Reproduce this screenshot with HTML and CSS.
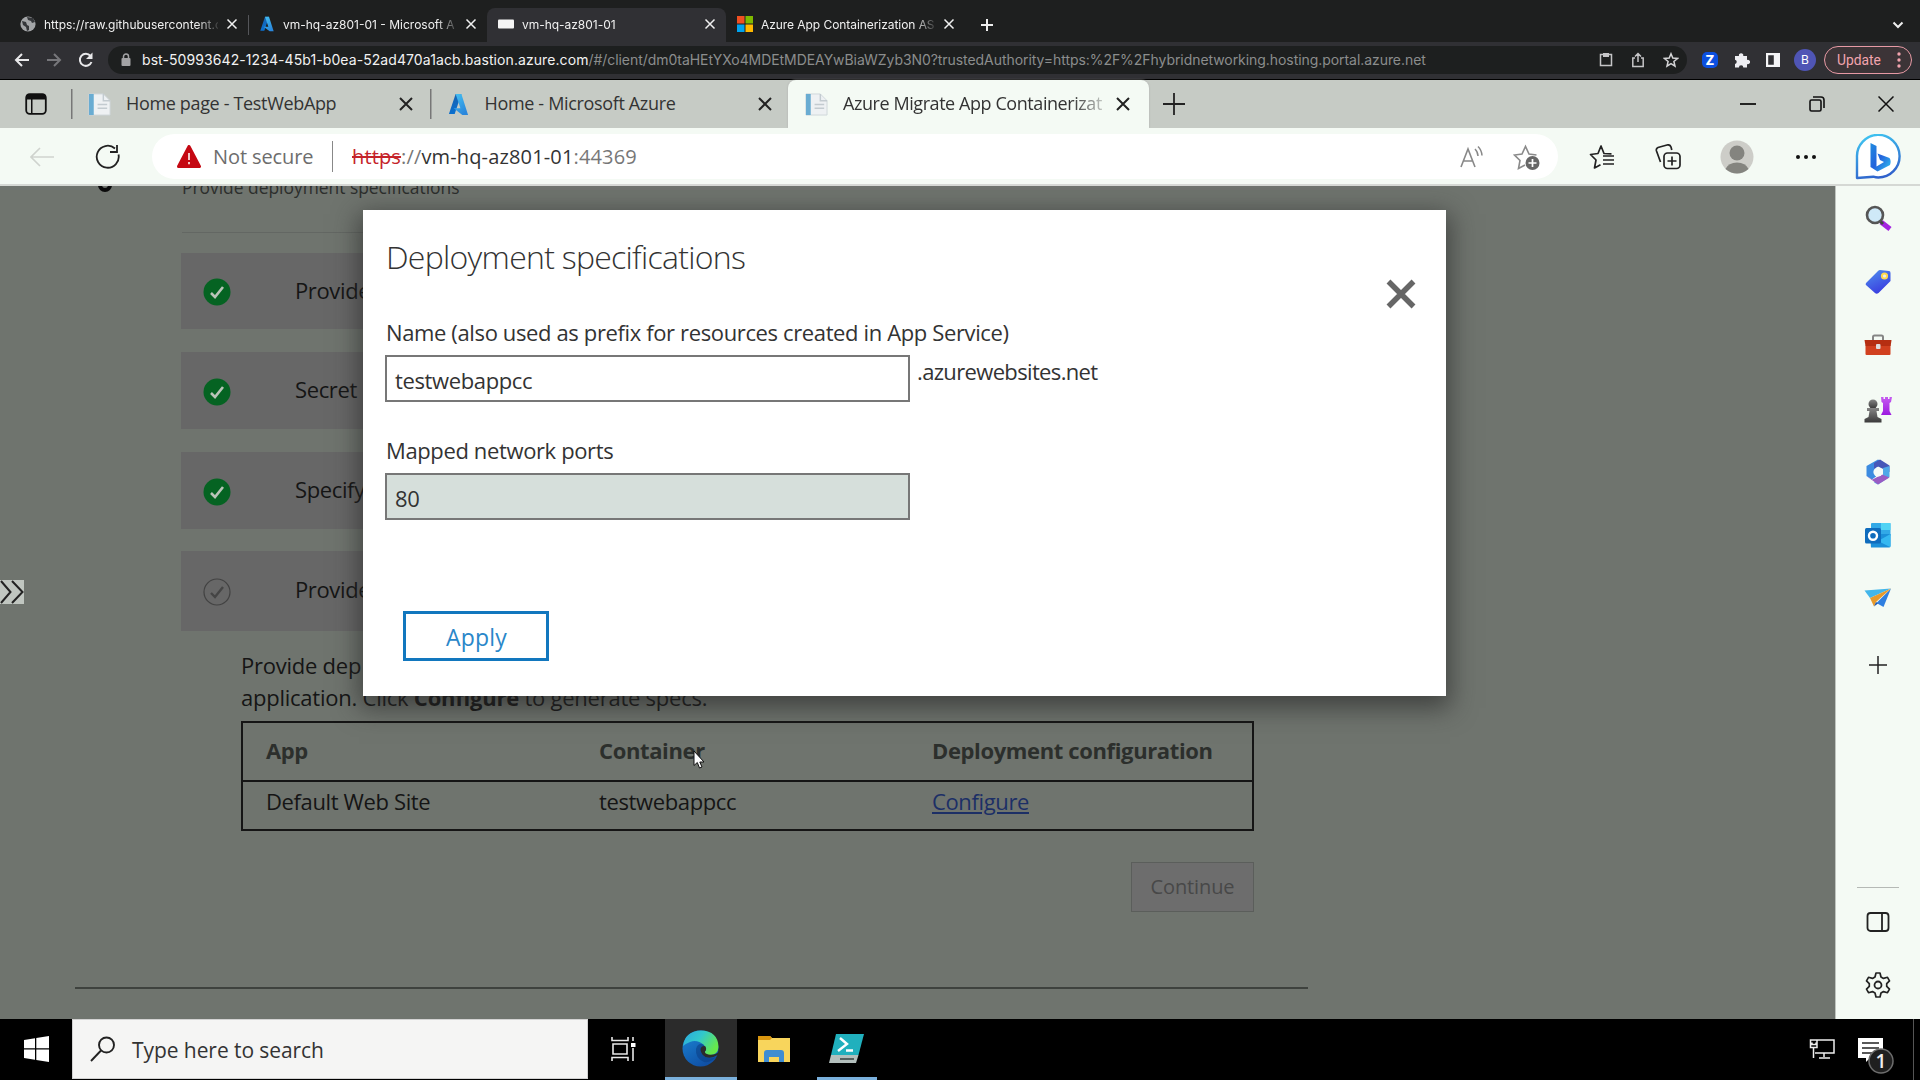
FILE: index.html
```html
<!DOCTYPE html>
<html lang="en">
<head>
<meta charset="utf-8">
<title>vm-hq-az801-01</title>
<link rel="stylesheet" href="styles.css">
</head>
<body>
<svg class="defs" width="0" height="0" aria-hidden="true">
  <defs>
    <linearGradient id="az1" x1="0" y1="0" x2="0.3" y2="1"><stop offset="0" stop-color="#1a5fa8"/><stop offset="1" stop-color="#0a70d0"/></linearGradient>
    <linearGradient id="az2" x1="0" y1="0" x2="0.6" y2="1"><stop offset="0" stop-color="#46c3f2"/><stop offset="1" stop-color="#2a87dc"/></linearGradient>
    <linearGradient id="bingRing" x1="0.3" y1="0" x2="0.6" y2="1"><stop offset="0" stop-color="#3fc3f0"/><stop offset="1" stop-color="#2f5fcb"/></linearGradient>
    <linearGradient id="bingB" x1="0" y1="0" x2="1" y2="1"><stop offset="0" stop-color="#1f8be0"/><stop offset="0.5" stop-color="#2463dc"/><stop offset="1" stop-color="#33c4f0"/></linearGradient>
    <linearGradient id="tagFill" x1="0" y1="0" x2="0.5" y2="1"><stop offset="0" stop-color="#4f92ee"/><stop offset="1" stop-color="#3a3ee0"/></linearGradient>
    <linearGradient id="pawnFill" x1="0" y1="0" x2="0" y2="1"><stop offset="0" stop-color="#858585"/><stop offset="1" stop-color="#3a3a3a"/></linearGradient>
    <linearGradient id="rookFill" x1="0" y1="0" x2="0" y2="1"><stop offset="0" stop-color="#c65cf0"/><stop offset="1" stop-color="#9c1ae0"/></linearGradient>
    <linearGradient id="edgeTop" x1="0" y1="0" x2="1" y2="0.5"><stop offset="0" stop-color="#2aa6e0"/><stop offset="0.5" stop-color="#32c8cc"/><stop offset="1" stop-color="#66e84c"/></linearGradient>
    <linearGradient id="edgeBase" x1="0" y1="0" x2="0.6" y2="1"><stop offset="0" stop-color="#1c86d6"/><stop offset="1" stop-color="#0f4fa4"/></linearGradient>
    <symbol id="azure" viewBox="0 0 22 24"><path d="M8 1h6L7 22H1z" fill="url(#az1)"/><path d="M8 1h6l7 22h-6L6 16h7z" fill="url(#az2)"/></symbol>
    <symbol id="close" viewBox="0 0 16 16"><path d="M2 2l12 12M14 2L2 14" fill="none" stroke="currentColor" stroke-width="2"/></symbol>
    <symbol id="page" viewBox="0 0 24 24"><path d="M1 1h15l7 7v15H1z" fill="#eef1f3" stroke="#cfd6da"/><path d="M1 1h5v22H1z" fill="#69acd2"/><path d="M16 1v7h7M10 12h10M10 16h10" fill="none" stroke="#c3cbd0" stroke-width="1.5"/></symbol>
    <symbol id="done" viewBox="0 0 28 28"><circle cx="14" cy="14" r="13.5" fill="#056322"/><path d="M8 15l4 4 8-10" fill="none" stroke="#b9c4b8" stroke-width="2.6"/></symbol>
  </defs>
</svg>

<div class="screen">
  <header class="chrome-tabs">
    <div class="ctab">
      <svg class="fav" viewBox="0 0 16 16"><circle cx="8" cy="8" r="7.6" fill="#a3a5a7"/><path d="M2 5l4 1 1 3 2 1v4l-2 1-1-4-3-2zM7 1l1 3 3 1 1 2 3-1-2-4z" fill="#35373a"/></svg>
      <span class="ctitle">https://raw.githubusercontent.c</span><svg class="cx"><use href="#close"/></svg>
    </div>
    <div class="ctab ruled">
      <svg class="fav"><use href="#azure"/></svg>
      <span class="ctitle">vm-hq-az801-01 - Microsoft A</span><svg class="cx"><use href="#close"/></svg>
    </div>
    <div class="ctab current">
      <svg class="fav" viewBox="0 0 16 16"><rect y="3.500" width="16" height="9" rx="1" fill="#f4f4f4"/></svg>
      <span class="ctitle">vm-hq-az801-01</span><svg class="cx"><use href="#close"/></svg>
    </div>
    <div class="ctab">
      <svg class="fav" viewBox="0 0 16 16"><path d="M0 0h7.500v7.500H0z" fill="#f05022"/><path d="M8.500 0H16v7.500H8.500z" fill="#7fba00"/><path d="M0 8.500h7.500V16H0z" fill="#00a4ef"/><path d="M8.500 8.500H16V16H8.500z" fill="#ffb900"/></svg>
      <span class="ctitle tight">Azure App Containerization AS</span><svg class="cx"><use href="#close"/></svg>
    </div>
    <svg class="cplus" viewBox="0 0 14 14"><path d="M7 1v12M1 7h12" stroke="#eee" stroke-width="2"/></svg>
    <svg class="cmenu" viewBox="0 0 12 8"><path d="M1.500 1.500L6 6l4.500-4.500" fill="none" stroke="#eee" stroke-width="2"/></svg>
  </header>

  <div class="chrome-bar">
    <nav class="cnav">
      <svg width="16" height="16" viewBox="0 0 16 16"><path d="M15 8H2M8 2L2 8l6 6" fill="none" stroke="#e8e8ea" stroke-width="2"/></svg>
      <svg width="16" height="16" viewBox="0 0 16 16"><path d="M1 8h13M8 2l6 6-6 6" fill="none" stroke="#77777b" stroke-width="2"/></svg>
      <svg width="16" height="16" viewBox="0 0 16 16"><path d="M13.500 10A6 6 0 1 1 12.500 4" fill="none" stroke="#e8e8ea" stroke-width="2"/><path d="M14.500 .5v6.500H8z" fill="#e8e8ea"/></svg>
    </nav>
    <div class="curl">
      <svg class="lock" viewBox="0 0 10 14"><rect x="0.500" y="5" width="9" height="8" rx="1" fill="#a3a3a5"/><path d="M2.500 5V3.500a2.500 2.500 0 0 1 5 0V5" fill="none" stroke="#a3a3a5" stroke-width="1.500"/></svg>
      <span class="chost">bst-50993642-1234-45b1-b0ea-52ad470a1acb.bastion.azure.com</span><span class="cpath">/#/client/dm0taHEtYXo4MDEtMDEAYwBiaWZyb3N0?trustedAuthority=https:%2F%2Fhybridnetworking.hosting.portal.azure.net</span>
      <div class="cactions">
        <svg width="14" height="15" viewBox="0 0 14 15"><path d="M1.500 2.500h11v11h-11z" fill="none" stroke="#c5c5c7" stroke-width="1.500"/><path d="M4 1h6v4H4z" fill="#c5c5c7"/></svg>
        <svg width="14" height="16" viewBox="0 0 14 16"><path d="M4 6H1.800v8.500h10.400V6H10M7 10V2M4 4.500L7 1.500l3 3" fill="none" stroke="#c5c5c7" stroke-width="1.500"/></svg>
        <svg width="16" height="16" viewBox="0 0 16 16"><path d="M8 1.800l1.800 4.300 4.700.4-3.600 3 1.100 4.600L8 11.700 4 14.100l1.100-4.600-3.600-3 4.700-.4z" fill="none" stroke="#d5d5d7" stroke-width="1.500"/></svg>
      </div>
    </div>
    <div class="cext">
      <span class="zoomext">Z</span>
      <svg width="16" height="16" viewBox="0 0 16 16"><path d="M1 4h4a2.200 2.200 0 1 1 4.200 0H13v4a2.200 2.200 0 1 1 0 4v3.500H9.300a2.200 2.200 0 0 0-4.400 0H1V12a2.200 2.200 0 0 0 0-4.300z" fill="#eeeef2"/></svg>
      <svg width="14" height="14" viewBox="0 0 14 14"><path d="M0 0h14v14H0zM2.200 2.200v9.600h5.600V2.200z" fill="#f4f4f6" fill-rule="evenodd"/></svg>
      <span class="cavatar">B</span>
    </div>
    <div class="update">Update<svg width="4" height="16" viewBox="0 0 4 16"><circle cx="2" cy="2" r="1.700" fill="#f2a4ae"/><circle cx="2" cy="8" r="1.700" fill="#f2a4ae"/><circle cx="2" cy="14" r="1.700" fill="#f2a4ae"/></svg></div>
  </div>

  <div class="edge-tabs">
    <svg class="workspace" viewBox="0 0 22 22"><rect x="1.200" y="1.200" width="19.600" height="19.600" rx="3.500" fill="none" stroke="#111" stroke-width="1.800"/><path d="M1 6.500V4q0-3 3-3h14q3 0 3 3v2.500zM6 6h1.500v15H6z" fill="#111"/></svg>
    <div class="etab"><svg class="efav"><use href="#page"/></svg><span class="etitle">Home page - TestWebApp</span><svg class="ex"><use href="#close"/></svg></div>
    <div class="etab"><svg class="efav"><use href="#azure"/></svg><span class="etitle">Home - Microsoft Azure</span><svg class="ex"><use href="#close"/></svg></div>
    <div class="etab live"><svg class="efav"><use href="#page"/></svg><span class="etitle faded">Azure Migrate App Containerizat</span><svg class="ex"><use href="#close"/></svg></div>
    <svg class="eplus" viewBox="0 0 22 22"><path d="M11 0v22M0 11h22" stroke="#222" stroke-width="1.800"/></svg>
    <div class="wincontrols">
      <svg width="16" height="16" viewBox="0 0 16 16"><path d="M0 8h16" stroke="#111" stroke-width="1.800"/></svg>
      <svg width="16" height="16" viewBox="0 0 16 16"><rect x="1" y="4" width="11" height="11" rx="1.500" fill="none" stroke="#111" stroke-width="1.600"/><path d="M4 1h8q3 0 3 3v8" fill="none" stroke="#111" stroke-width="1.600"/></svg>
      <svg width="16" height="16" viewBox="0 0 16 16"><path d="M.5.500l15 15M15.500.500l-15 15" stroke="#111" stroke-width="1.500"/></svg>
    </div>
  </div>

  <div class="edge-bar">
    <svg class="eback" viewBox="0 0 24 20"><path d="M24 10H1M10 1L1 10l9 9" fill="none" stroke="#cfd3ce" stroke-width="1.600"/></svg>
    <svg class="ereload" viewBox="0 0 26 26"><path d="M23.500 10.500a11 11 0 1 1-3.500-6" fill="none" stroke="#222" stroke-width="1.800"/><path d="M22 1v7h-7" fill="none" stroke="#222" stroke-width="1.800"/></svg>
    <div class="eurl">
      <svg class="warn" viewBox="0 0 24 23"><path d="M12 1.500L22.500 21.500h-21z" fill="#c50812" stroke="#c50812" stroke-width="3" stroke-linejoin="round"/><path d="M12 8v7M12 17v2.200" stroke="#f3c8c8" stroke-width="2"/></svg>
      <span class="insecure">Not secure</span>
      <span class="eaddr"><s>https</s><i>://</i>vm-hq-az801-01<i>:44369</i></span>
      <svg class="aloud" viewBox="0 0 24 24"><path d="M1 22L8 4l7 18M3.500 16h9" fill="none" stroke="#888" stroke-width="1.600"/><path d="M15 4a10 10 0 0 1 3 7M18 1.500a14 14 0 0 1 4 9" fill="none" stroke="#888" stroke-width="1.500"/></svg>
      <svg class="addfav" viewBox="0 0 27 26"><path d="M12 21l-6.500 3.500L7 16.500 1.500 11l7.500-1L12.500 2.500 16 10l7.500 1" fill="none" stroke="#8a8a8a" stroke-width="1.600"/><circle cx="19.500" cy="19" r="7" fill="#666"/><path d="M19.500 15v8M15.500 19h8" stroke="#fff" stroke-width="1.700"/></svg>
    </div>
    <div class="etools">
      <svg width="26" height="26" viewBox="0 0 26 26"><path d="M22.500 9.800L15 9.500 12 2 9 9.500l-7.500 1L7 16l-1.500 8 6-3.200M14 12h11M14 16h11M14 20h11" fill="none" stroke="#222" stroke-width="1.700" stroke-linejoin="round"/></svg>
      <svg width="26" height="26" viewBox="0 0 26 26"><rect x="9" y="9" width="16" height="15.500" rx="3.500" fill="none" stroke="#222" stroke-width="1.700"/><path d="M17 12.500v9M12.500 17h9M5.500 18L1.500 7q-.8-2.500 1.500-3.500L12 1q3-.8 4 2l.8 3" fill="none" stroke="#222" stroke-width="1.700"/></svg>
      <svg width="34" height="34" viewBox="0 0 34 34"><circle cx="17" cy="17" r="16.500" fill="#cdcdc8"/><circle cx="17" cy="13" r="7.500" fill="#84847f"/><path d="M5.500 29q3-6.500 11.500-6.500T28.500 29Q23 33.500 17 33.500T5.500 29z" fill="#84847f"/></svg>
      <svg width="22" height="6" viewBox="0 0 22 6"><circle cx="3" cy="3" r="2" fill="#111"/><circle cx="11" cy="3" r="2" fill="#111"/><circle cx="19" cy="3" r="2" fill="#111"/></svg>
      <svg width="46" height="46" viewBox="0 0 46 46"><path d="M2 44V23a21.300 21.300 0 1 1 21.300 20.500q-2.500 0-5-.8z" fill="#fff" stroke="url(#bingRing)" stroke-width="2.400" stroke-linejoin="round"/><path d="M15.500 9l6 3v20.500l7.500-4.500-4-2-2.500-6.500 12 4.500q2 3 .5 7L22.500 37.500l-7-4.500z" fill="url(#bingB)"/></svg>
    </div>
  </div>

  <div class="workarea">
    <main class="page">
      <div class="progress"><span class="dot"></span><span class="phase">Provide deployment specifications</span></div>
      <hr class="thin">
      <section class="steps">
        <div class="step"><svg><use href="#done"/></svg><span>Provide</span></div>
        <div class="step"><svg><use href="#done"/></svg><span>Secret</span></div>
        <div class="step"><svg><use href="#done"/></svg><span>Specify</span></div>
        <div class="step"><svg viewBox="0 0 28 28"><circle cx="14" cy="14" r="13" fill="none" stroke="#424242" stroke-width="1.200"/><path d="M8 15l4 4 8-10" fill="none" stroke="#454545" stroke-width="2.400"/></svg><span>Provide</span></div>
      </section>
      <p class="intro">Provide dep<br>application. Click <b>Configure</b> to generate specs.</p>
      <table class="apps">
        <colgroup><col class="c1"><col class="c2"><col></colgroup>
        <tr><th>App</th><th>Container</th><th>Deployment configuration</th></tr>
        <tr><td>Default Web Site</td><td>testwebappcc</td><td><a>Configure</a></td></tr>
      </table>
      <div class="continue">Continue</div>
      <hr class="end">

      <div class="expander"><svg width="24" height="24" viewBox="0 0 24 24"><path d="M1 1l9.500 11L1 23M12 1l10.500 11L12 23" fill="none" stroke="#222" stroke-width="2"/></svg></div>

      <div class="modal">
        <div class="modal-head"><h1>Deployment specifications</h1><svg viewBox="0 0 30 30"><path d="M2.500 2.500l25 25M27.500 2.500l-25 25" stroke="#666" stroke-width="5.500"/></svg></div>
        <label>Name (also used as prefix for resources created in App Service)</label>
        <div class="field"><div class="box">testwebappcc</div><span class="suffix">.azurewebsites.net</span></div>
        <label class="second">Mapped network ports</label>
        <div class="field"><div class="box locked">80</div></div>
        <div class="apply">Apply</div>
      </div>

      <svg class="cursor" viewBox="0 0 12 19"><path d="M1 1v14.500l3.300-3L6.500 18l2.500-1-2.200-5H11z" fill="#fff" stroke="#111"/></svg>
    </main>

    <aside class="rail">
      <svg viewBox="0 0 28 28"><path d="M17 17l9 7" stroke="#a423e0" stroke-width="5"/><path d="M15 15l4 4" stroke="#444" stroke-width="3"/><circle cx="11" cy="10" r="8" fill="#cfe9f8" stroke="#555" stroke-width="2.600"/></svg>
      <svg viewBox="0 0 28 28"><path d="M2 15L14 3q1-1 2-1l9 1q1.500 0 1.500 2v8L14.500 25q-2 1.500-3.500 0l-8.500-7.500q-1.500-1-.5-2.500z" fill="url(#tagFill)"/><circle cx="20.500" cy="8" r="3.600" fill="#ffd84d"/><circle cx="20.500" cy="8" r="1.600" fill="#e8eef4"/></svg>
      <svg viewBox="0 0 28 28"><path d="M9 9V6q0-1.500 1.500-1.500h7Q19 4.500 19 6v3" fill="none" stroke="#858585" stroke-width="2"/><rect x="1.500" y="14" width="25" height="10" rx="1" fill="#d1401f"/><path d="M.5 9h27l-.8 6H1.500z" fill="#b52e12"/><rect x="12" y="13" width="4.500" height="5" rx="1" fill="#ddd"/></svg>
      <svg viewBox="0 0 28 28"><path d="M17 2h2.500v2H21V2h3v2h1.500V2H28l-1 5-1.500 1v8l2 4H17l2-4V8l-1.500-1z" fill="url(#rookFill)"/><circle cx="9" cy="9" r="4.500" fill="url(#pawnFill)"/><path d="M3 13h12v3h-2.500l1 6 4 2v3.500H.5V24l4-2 1-6H3z" fill="url(#pawnFill)"/></svg>
      <svg viewBox="0 0 28 28"><path d="M14 1.500l6 3-8 5v9l-4 3-5.500-3.500V8z" fill="#3c8be0"/><path d="M16 1.500l9.500 6V14L14 8.500 10 11V5z" fill="#4657b8"/><path d="M25.500 8v11L14 26.500l-4-2 9-5.500v-9z" fill="#4ea8e8"/><path d="M2.500 18l6 3.500 9.500-5 7.500 3L14 26.500z" fill="#985cc4"/><circle cx="14" cy="14" r="4.600" fill="#f5fbf6"/></svg>
      <svg viewBox="0 0 28 28"><rect x="7" y="2" width="19.500" height="13" rx="1" fill="#32a9e7"/><path d="M17 2h9.500v7H17z" fill="#50d3f4"/><path d="M6 13l20.500 0v12q0 1.500-1.500 1.500H7z" fill="#1b8fd8"/><path d="M26.500 13L14 20l12 6q.5-.5.500-1z" fill="#35b8f1"/><rect x="1" y="7" width="16" height="15.500" rx="1.500" fill="#0f6cbd"/><circle cx="9" cy="14.700" r="4" fill="none" stroke="#fff" stroke-width="2.400"/></svg>
      <svg viewBox="0 0 28 28"><path d="M.5 6.500L27 4.500 6 14z" fill="#42b6ea"/><path d="M27 4.500L19.500 23l-7-4z" fill="#2f7fe0"/><path d="M27 4.500L12 18l-2 4.500L6 14z" fill="#e79a2c"/><path d="M12 18l-2 4.500 4-3z" fill="#1b56b0"/></svg>
      <svg viewBox="0 0 28 28"><path d="M14 5v18M5 14h18" stroke="#222" stroke-width="1.500"/></svg>
      <hr>
      <svg viewBox="0 0 28 28"><rect x="3.500" y="5" width="21" height="18" rx="3" fill="none" stroke="#222" stroke-width="1.800"/><path d="M18 5v18" stroke="#222" stroke-width="1.800"/></svg>
      <svg viewBox="0 0 28 28"><path d="M12 2h4l1 4 2.500 1.400L23.500 6.300l2 3.500L22.700 12.600v2.800l2.800 2.800-2 3.500-4-1.100L17 22l-1 4h-4l-1-4-2.500-1.400-4 1.100-2-3.500 2.800-2.800v-2.800L2.500 9.800l2-3.500 4 1.100L11 6z" fill="none" stroke="#222" stroke-width="1.700" stroke-linejoin="round"/><circle cx="14" cy="14" r="3.500" fill="none" stroke="#222" stroke-width="1.800"/></svg>
    </aside>
  </div>

  <footer class="taskbar">
    <div class="start"><svg width="25" height="26" viewBox="0 0 25 26"><path d="M0 4l11-1.800V12.300H0zM12.300 2L25 0v12.300H12.300zM0 13.600h11v10.200L0 22zM12.300 13.600H25V26l-12.700-2z" fill="#fff"/></svg></div>
    <div class="search"><svg width="26" height="26" viewBox="0 0 26 26"><circle cx="16.500" cy="9" r="7.500" fill="none" stroke="#222" stroke-width="1.900"/><path d="M11 14.500L1 25" stroke="#222" stroke-width="1.900"/></svg><span>Type here to search</span></div>
    <div class="task"><svg width="26" height="24" viewBox="0 0 26 24"><path d="M2 7h14v10H2zM1 0v3.500h16V0M1 24v-3.500h16V24M22 0v4M22 11v13" fill="none" stroke="#e8e8e8" stroke-width="1.600"/><path d="M20 6h4.500v4H20z" fill="#fff"/></svg></div>
    <div class="task active"><svg width="37" height="37" viewBox="0 0 37 37"><circle cx="18.500" cy="18.500" r="18" fill="url(#edgeBase)"/><path d="M1 16Q3 1 19 .5 36 1 36.500 17 36 25 28 25q-5 0-6-2 3-4 0-8-7-6-14-3-5 2-7 4z" fill="url(#edgeTop)"/><path d="M22 15q-6-3-8 4-1 9 8 13 7 1 12-5-7 3-12-1-3-3-1-6 2-2 1-5z" fill="#0b3f86" opacity=".6"/><path d="M22.500 16q-4 0-4 4 1 5 5 7 6 2 12-2l1.500 1q1-2 .5-5-4 5-11 3.500-4-1-3.500-3 2-2 .5-5z" fill="#2b2b2b"/></svg></div>
    <div class="task"><svg width="34" height="28" viewBox="0 0 34 28"><path d="M1 1h12l2 2h18v24H1z" fill="#f8d55c"/><path d="M1 1h12l2 2-2 2H1z" fill="#d9960f"/><path d="M7 27V18q0-3 3-3h14q3 0 3 3v9h-5v-5h-10v5z" fill="#3f8dd2"/></svg></div>
    <div class="task running"><svg width="37" height="31" viewBox="0 0 37 31"><path d="M8 1h28l-5.500 21H3z" fill="#20b0bd"/><path d="M3 22h27.500L28 30H1z" fill="#b3bfbc"/><path d="M12 5l7 6-9 7M18 17.500h7" fill="none" stroke="#fff" stroke-width="2.400"/><path d="M12 26h14" stroke="#54605e" stroke-width="2"/></svg></div>
    <div class="tray">
      <svg width="26" height="22" viewBox="0 0 26 22"><path d="M8 2h17v13H6M15 15v4M10 20h11M1.500 2H8v7.500H1.500zM4.500 9.500V20M3 4.500v2h4v-2" fill="none" stroke="#eee" stroke-width="1.500"/></svg>
      <svg class="notify" width="38" height="38" viewBox="0 0 38 38"><path d="M1 1h25v20H13l-4 4v-4H1z" fill="#fff"/><path d="M5 6h17M5 11h17M5 16h12" stroke="#222" stroke-width="1.600"/><circle cx="24" cy="24" r="12" fill="#1f1f1f" stroke="#6d6d6d" stroke-width="1.500"/><text x="24" y="30.500" text-anchor="middle" class="count">1</text></svg>
    </div>
  </footer>
</div>
</body>
</html>
```
FILE: styles.css
```css
* { box-sizing: border-box; }
body { margin: 0; font-family: "Open Sans", "Noto Sans", sans-serif; background: #000; }
svg { flex: none; display: block; }
.defs { position: absolute; }
.screen { width: 1920px; height: 1080px; overflow: hidden; display: flex; flex-direction: column; }

/* outer browser */
.chrome-tabs { height: 42px; flex: none; background: #1e1f1f; display: flex; align-items: flex-end; padding-left: 9px; font: 12px "Inter", sans-serif; color: #f0f0f0; }
.ctab { width: 239px; height: 34px; display: flex; align-items: center; padding: 0 10px 2px 11px; border-radius: 8px 8px 0 0; }
.ctab.ruled { background: linear-gradient(#55565a, #55565a) 0 50% / 1px 20px no-repeat; }
.ctab.current { background: #303034; }
.fav { width: 16px; height: 16px; margin-right: 8px; }
.ctitle { width: 174px; margin-right: 8px; white-space: nowrap; overflow: hidden; -webkit-mask-image: linear-gradient(90deg, #000 88%, transparent 102%); mask-image: linear-gradient(90deg, #000 88%, transparent 102%); }
.ctab.current .ctitle { letter-spacing: -.03px; }
.ctitle.tight { letter-spacing: -.06px; }
.cx { width: 12px; height: 12px; color: #f0f0f0; }
.cplus { width: 14px; height: 14px; margin: 0 0 10px 15px; }
.cmenu { width: 12px; height: 8px; margin: 0 16px 13px auto; }

.chrome-bar { height: 38px; flex: none; background: #303034; border-bottom: 1px solid #000; display: flex; align-items: center; padding-bottom: 2px; font: 14px "Inter", sans-serif; }
.cnav { width: 108px; padding-left: 14px; display: flex; gap: 16px; }
.curl { width: 1579px; height: 28px; border-radius: 14px; background: #1d1f1f; display: flex; align-items: center; padding: 0 8px 0 13px; white-space: nowrap; }
.lock { width: 10px; height: 14px; margin-right: 11px; }
.chost { color: #f2f2f2; letter-spacing: .08px; }
.cpath { color: #8b8d8d; letter-spacing: -.06px; }
.cactions { margin-left: auto; display: flex; gap: 18px; align-items: center; }
.cext { display: flex; align-items: center; margin-left: 15px; gap: 16px; }
.zoomext { width: 16px; height: 16px; border-radius: 5px; background: #0b4fe0; color: #fff; font-weight: 800; font-size: 13px; line-height: 16px; text-align: center; }
.cavatar { width: 22px; height: 22px; margin-left: -2px; border-radius: 50%; background: #4f55b5; color: #fff; font-size: 12px; line-height: 22px; text-align: center; }
.update { width: 88px; height: 28px; margin-left: 8px; border: 1.5px solid #e79aa5; border-radius: 14px; background: #3c3437; color: #f2a4ae; font: 13.8px "Roboto", sans-serif; display: flex; align-items: center; justify-content: space-between; padding: 0 10px 0 12px; }

/* inner browser */
.edge-tabs { height: 48px; flex: none; background: #c6cbc5; display: flex; align-items: center; padding-left: 25px; }
.workspace { width: 22px; height: 22px; margin-right: 24px; }
.etab { width: 358.5px; height: 48px; display: flex; align-items: center; padding-left: 17px; background: linear-gradient(#777, #777) 0 50% / 1.5px 30px no-repeat; }
.etab.live { width: 361px; background: #f4faf4; border-radius: 8px 8px 0 0; box-shadow: 0 0 2px #aaa; }
.efav { width: 23px; height: 23px; }
.etitle { margin-left: 15px; width: 260px; font-size: 18px; letter-spacing: -.34px; color: #333; white-space: nowrap; overflow: hidden; position: relative; top: -1px; }
.etitle.faded { letter-spacing: -.43px; -webkit-mask-image: linear-gradient(90deg, #000 88%, transparent 104%); mask-image: linear-gradient(90deg, #000 88%, transparent 104%); }
.ex { width: 16px; height: 16px; margin-left: 12px; color: #222; }
.eplus { width: 22px; height: 22px; margin-left: 14px; }
.wincontrols { margin-left: auto; margin-right: 26px; display: flex; gap: 53px; }

.edge-bar { height: 58px; flex: none; background: #f4faf4; display: flex; align-items: center; padding-top: 1px; border-bottom: 2px solid #d5d8d4; }
.eback { width: 24px; height: 20px; margin-left: 30px; }
.ereload { width: 26px; height: 26px; margin: 0 31px 0 41px; }
.eurl { width: 1406px; height: 45px; border-radius: 23px; background: #fff; display: flex; align-items: center; padding: 0 18px 0 25px; font-size: 20px; white-space: nowrap; }
.warn { width: 24px; height: 23px; }
.insecure { margin-left: 12px; width: 119px; color: #6d6d6d; letter-spacing: -.1px; }
.eaddr { color: #333; border-left: 1px solid #888; padding-left: 19px; line-height: 31px; letter-spacing: .15px; }
.eaddr s { color: #c5232a; }
.eaddr i { font-style: normal; color: #777; }
.aloud { width: 24px; height: 24px; margin-left: auto; }
.addfav { width: 27px; height: 26px; margin-left: 29px; }
.etools { display: flex; align-items: center; margin-left: 31px; }
.etools svg:nth-child(2) { margin-left: 40px; }
.etools svg:nth-child(3) { margin-left: 39px; }
.etools svg:nth-child(4) { margin-left: 41px; }
.etools svg:nth-child(5) { margin-left: 38px; }

.workarea { height: 833px; flex: none; display: flex; }
.page { width: 1835px; position: relative; overflow: hidden; background: #6f746e; display: flex; flex-direction: column; color: #151515; font-size: 22px; letter-spacing: -.37px; }
.progress { height: 46px; flex: none; display: flex; padding-left: 98px; }
.dot { width: 14px; height: 14px; margin: -8px 70px 0 0; border-radius: 50%; border: 4px solid #0b0b0b; }
.phase { font-size: 17.4px; line-height: 24px; margin-top: -11px; letter-spacing: 0; color: #2c2e2c; }
.thin { width: 181px; margin: 0 0 20px 182px; border: 0; border-top: 1px solid #636763; }
.steps { margin-left: 181px; display: grid; grid-template-rows: 76px 77px 77px 79px; gap: 23px 0; width: 900px; }
.step { background: #676767; display: flex; align-items: center; padding: 0 0 3px 22px; }
.step svg { width: 28px; height: 28px; margin: 5px 64px 0 0; }
.step:last-child { margin-top: -1px; padding-bottom: 4px; }
.intro { margin: 18px 0 0 241px; line-height: 32px; letter-spacing: -.24px; }
.apps { margin: 8px 0 0 241px; width: 1013px; border-collapse: collapse; table-layout: fixed; border: 2px solid #151515; }
.c1 { width: 334px; }
.c2 { width: 333px; }
.apps th, .apps td { text-align: left; padding: 0 0 0 23px; }
.apps th { height: 59px; padding-bottom: 3px; color: #2c2f2c; border-bottom: 2px solid #151515; }
.apps td { height: 49px; padding-bottom: 9px; }
.apps a { color: #1c2f66; text-decoration: underline; }
.continue { width: 123px; height: 50px; margin: 31px 0 0 1131px; border: 1px solid #5b5e5b; background: #6d6d6d; color: #484848; font-size: 20px; letter-spacing: -.1px; text-align: center; line-height: 47px; }
.end { width: 1233px; margin: 75px 0 0 75px; border: 0; border-top: 2px solid #3e423e; }

.expander { position: absolute; left: 0; top: 394px; width: 24px; height: 24px; background: #c0c6c0; }
.modal { position: absolute; left: 363px; top: 24px; width: 1083px; height: 486px; padding: 24px 0 0 23px; background: #fff; box-shadow: 0 8px 24px 4px rgba(40, 40, 40, .65); color: #333; }
.modal-head { display: flex; justify-content: space-between; padding-right: 30px; height: 81px; }
.modal-head h1 { margin: 0; font-size: 32px; font-weight: 300; letter-spacing: -.72px; line-height: 46px; color: #333; }
.modal-head svg { width: 30px; height: 30px; margin-top: 45px; }
.modal label { display: block; height: 40px; line-height: 34px; }
.modal .second { margin-top: 31px; }
.field { display: flex; height: 47px; margin-left: -1px; }
.box { width: 525px; border: 2px solid #777; padding-left: 8px; line-height: 46px; color: #333; }
.locked { background: #d6dfdb; }
.suffix { margin-left: 7px; line-height: 32px; letter-spacing: -.65px; }
.apply { width: 146px; height: 50px; margin: 91px 0 0 17px; border: 3px solid #1277be; color: #2a87c9; font-size: 23px; letter-spacing: .2px; line-height: 46px; padding-left: 1px; text-align: center; }
.cursor { position: absolute; left: 693px; top: 564px; width: 12px; height: 19px; }

.rail { width: 85px; background: #f4faf4; display: flex; flex-direction: column; align-items: center; padding-top: 19px; gap: 35.2px; border-left: 1px solid #bfc4bf; }
.rail svg { width: 28px; height: 28px; }
.rail svg:nth-child(8) { margin-top: 4px; }
.rail hr { width: 42px; margin: auto 0 -15px; border: 0; border-top: 1px solid #b5b9b5; }
.rail svg:last-child { margin-bottom: 20px; }

.taskbar { flex: 1; background: #000; display: flex; align-items: stretch; }
.start { width: 72px; display: flex; align-items: center; justify-content: center; padding-bottom: 1px; }
.search { width: 516px; height: 60px; background: #f5f5f4; border: 1px solid #d2d2d2; display: flex; align-items: center; padding-left: 17px; gap: 16px; font-size: 21px; letter-spacing: -.07px; line-height: 30px; color: #333; }
.search span { padding-top: 2px; }
.task { display: flex; align-items: center; justify-content: center; width: 73px; padding-bottom: 2px; }
.search + .task { width: 77px; padding-right: 5px; }
.task.active { width: 72px; background: #2b2b2b; border-bottom: 3px solid #7ab0dc; padding: 0 2px 0 0; }
.task.running { background: linear-gradient(#7ab0dc, #7ab0dc) 50% 100% / 60px 3px no-repeat; }
.tray { margin-left: auto; display: flex; align-items: center; gap: 22px; padding: 0 18px 2px 0; border-right: 1px solid #555; margin-right: 6px; }
.notify { margin-top: 14px; }
.count { font: 600 19px "Open Sans", sans-serif; fill: #eee; }
```
